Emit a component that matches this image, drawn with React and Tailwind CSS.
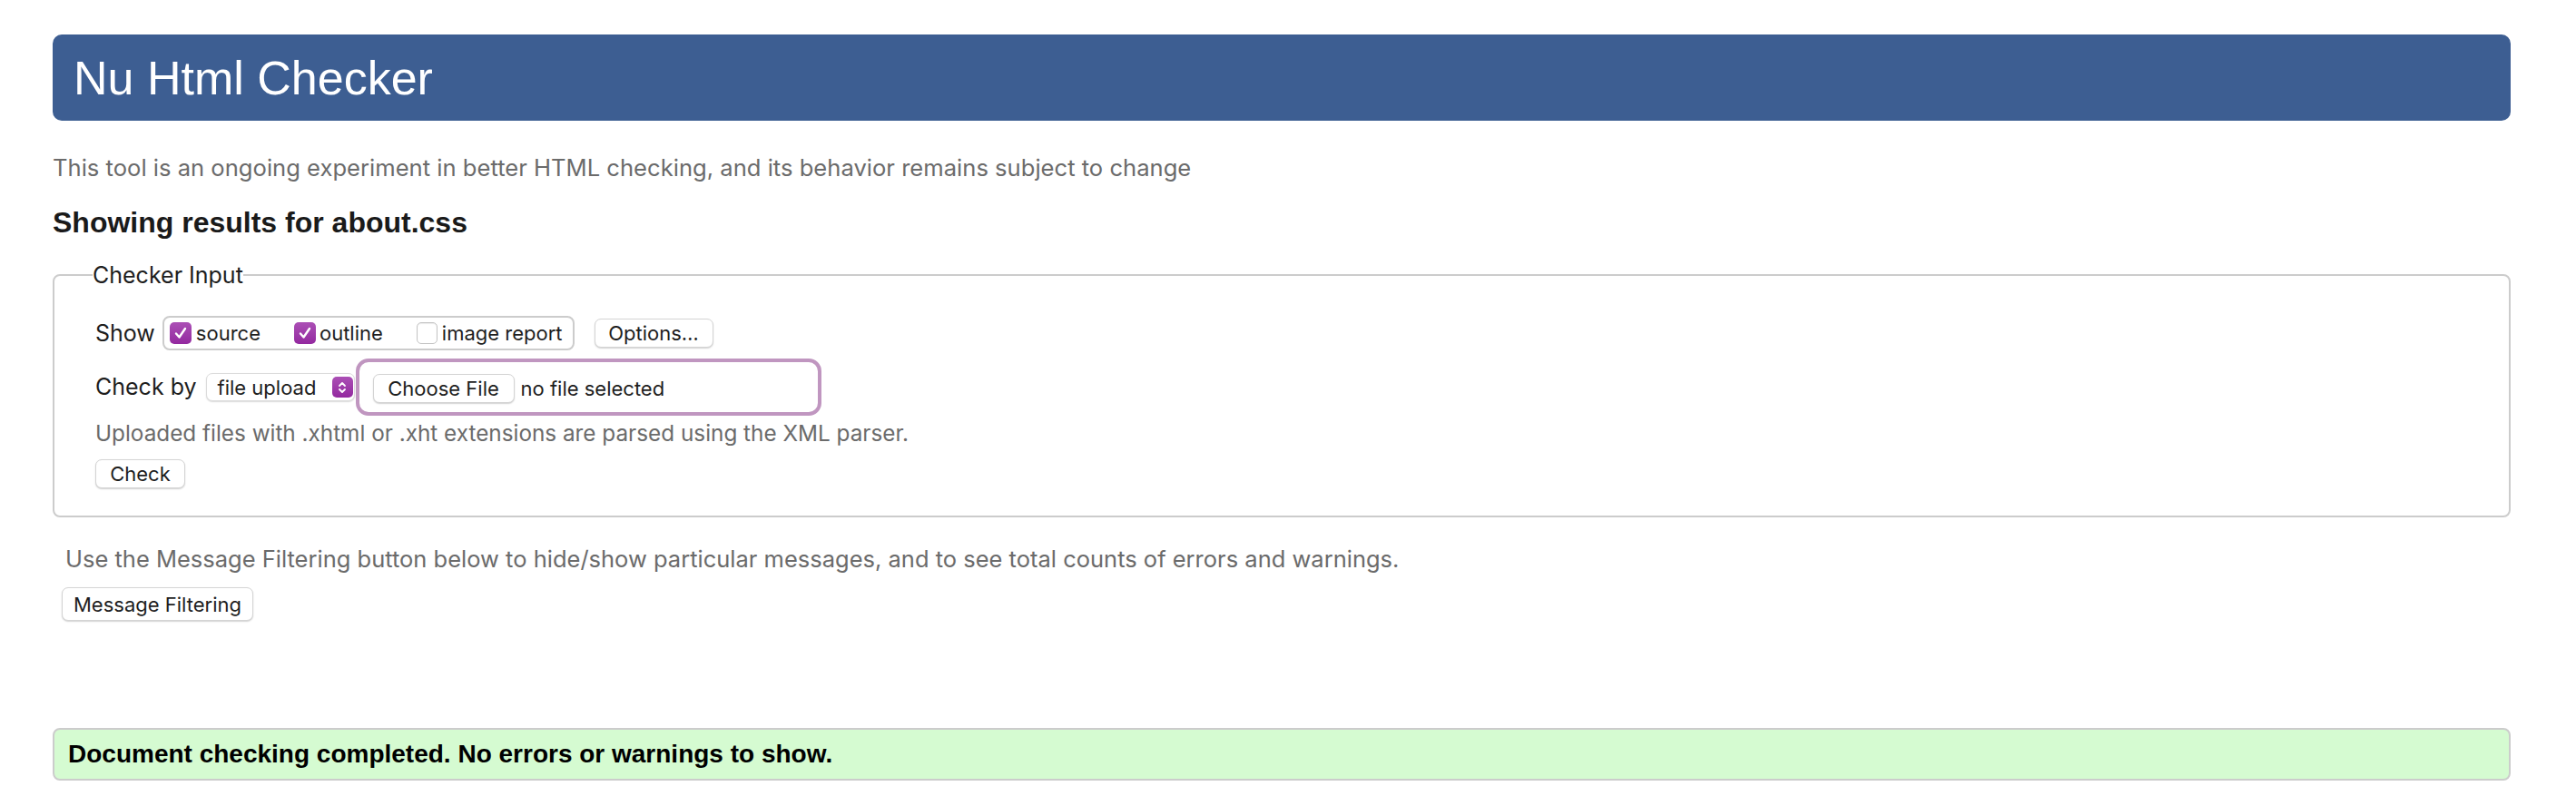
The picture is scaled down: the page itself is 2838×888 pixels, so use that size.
import React from "react";

const ui = "font-['Inter','Liberation_Sans',sans-serif]";
const arial = "font-['Liberation_Sans','Arial',sans-serif]";

function Check({ checked }) {
  if (!checked) {
    return (
      <span className="block h-[24px] w-[23px] shrink-0 rounded-[5px] border border-[#c4c4c4] bg-white shadow-[inset_0_1px_1px_rgba(0,0,0,0.08)]" />
    );
  }
  return (
    <span className="flex h-[24px] w-[24px] shrink-0 items-center justify-center rounded-[5px] bg-gradient-to-b from-[#ab4fb5] to-[#93289f]">
      <svg width="16" height="16" viewBox="0 0 16 16" fill="none">
        <path d="M3 8.5 L6.5 12.5 L13 3" stroke="white" strokeWidth="2.4" strokeLinecap="round" strokeLinejoin="round" />
      </svg>
    </span>
  );
}

function Btn({ children, className = "" }) {
  return (
    <button
      className={`flex items-center justify-center rounded-[7px] border border-[#d4d4d4] bg-white text-[22px] leading-none text-[#1e1e1e] shadow-[0_1px_1.5px_rgba(0,0,0,0.18)] ${ui} ${className}`}
    >
      {children}
    </button>
  );
}

export default function App() {
  return (
    <div className={`min-h-[888px] w-[2838px] bg-white pl-[58px] pr-[72px] pt-[38px] ${ui}`}>
      <header className="flex h-[95px] items-center rounded-[10px] bg-[#3d5e92] px-[23px]">
        <h1 className={`text-[52px] font-normal leading-none text-white ${arial}`}>Nu Html Checker</h1>
      </header>

      <p className="mt-[37px] text-[25.6px] leading-[30px] text-[#6b6b6b]">
        This tool is an ongoing experiment in better HTML checking, and its behavior remains subject to change
      </p>

      <h2 className={`mt-[27px] text-[32px] font-bold leading-[36px] text-[#1a1a1a] ${arial}`}>
        Showing results for about.css
      </h2>

      <fieldset className="mt-[25px] rounded-[8px] border-2 border-[#cccccc] pb-[30px] pl-[45px] pr-[20px] pt-[30px]">
        <legend className="ml-[-3px] px-0 text-[25px] leading-[30px] text-[#1e1e1e]">Checker Input</legend>

        <div className="flex h-[38px] items-center">
          <span className="text-[25px] leading-none text-[#1e1e1e]">Show</span>
          <div className="ml-[8px] flex h-[38px] items-center rounded-[8px] border-2 border-[#cccccc] pl-[6px] pr-[11px]">
            <Check checked />
            <span className="ml-[5px] text-[22px] leading-none text-[#1e1e1e]">source</span>
            <span className="ml-[37px] flex"><Check checked /></span>
            <span className="ml-[4px] text-[22px] leading-none text-[#1e1e1e]">outline</span>
            <span className="ml-[37px] flex"><Check /></span>
            <span className="ml-[5px] text-[22px] leading-none text-[#1e1e1e]">image report</span>
          </div>
          <Btn className="ml-[22px] h-[32px] w-[131px]">Options…</Btn>
        </div>

        <div className="mt-[9px] flex h-[63px] items-center">
          <span className="text-[25px] leading-none text-[#1e1e1e]">Check by</span>
          <div className="ml-[10px] flex h-[31px] w-[164px] items-center justify-between rounded-[7px] border border-[#dcdcdc] bg-white pl-[12px] pr-[1px] shadow-[0_1px_1.5px_rgba(0,0,0,0.15)]">
            <span className="text-[22px] leading-none text-[#1e1e1e]">file upload</span>
            <span className="flex h-[23px] w-[23px] items-center justify-center rounded-[5px] bg-gradient-to-b from-[#ab4fb5] to-[#93289f]">
              <svg width="12" height="16" viewBox="0 0 12 16" fill="none">
                <path d="M3 6 L6 3 L9 6" stroke="white" strokeWidth="1.8" strokeLinecap="round" strokeLinejoin="round" />
                <path d="M3 10 L6 13 L9 10" stroke="white" strokeWidth="1.8" strokeLinecap="round" strokeLinejoin="round" />
              </svg>
            </span>
          </div>
          <div className="ml-px flex h-[63px] w-[513px] items-center rounded-[14px] border-[4px] border-[#c096c0] pl-[15px]">
            <Btn className="mt-[3px] h-[32px] w-[156px]">Choose File</Btn>
            <span className="ml-[7px] mt-[3px] text-[22px] leading-none text-[#1e1e1e]">no file selected</span>
          </div>
        </div>

        <p className="mt-[4px] text-[24.3px] leading-[30px] text-[#6b6b6b]">
          Uploaded files with .xhtml or .xht extensions are parsed using the XML parser.
        </p>

        <Btn className="mt-[14px] h-[32px] w-[99px]">Check</Btn>
      </fieldset>

      <p className="ml-[14px] mt-[31px] text-[25.5px] leading-[30px] text-[#6b6b6b]">
        Use the Message Filtering button below to hide/show particular messages, and to see total counts of errors and warnings.
      </p>

      <Btn className="ml-[10px] mt-[16px] h-[37px] w-[211px]">Message Filtering</Btn>

      <div className="mt-[118px] flex h-[58px] items-center rounded-[8px] border-2 border-[#cccccc] bg-[#d5fbd1] px-[15px]">
        <p className={`text-[28px] font-bold leading-none text-black ${arial}`}>
          Document checking completed. No errors or warnings to show.
        </p>
      </div>
    </div>
  );
}
